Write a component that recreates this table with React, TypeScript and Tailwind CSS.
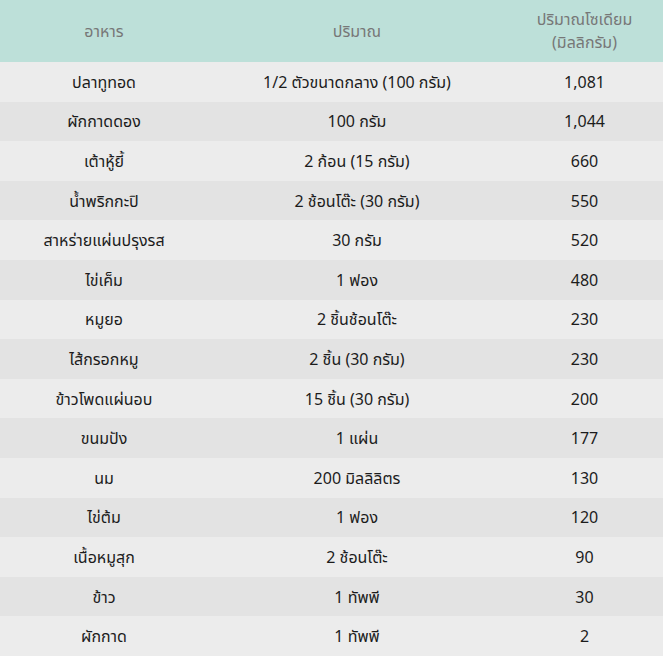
import React from "react";

const rows: [string, string, string][] = [
  ["ปลาทูทอด", "1/2 ตัวขนาดกลาง (100 กรัม)", "1,081"],
  ["ผักกาดดอง", "100 กรัม", "1,044"],
  ["เต้าหู้ยี้", "2 ก้อน (15 กรัม)", "660"],
  ["น้ำพริกกะปิ", "2 ช้อนโต๊ะ (30 กรัม)", "550"],
  ["สาหร่ายแผ่นปรุงรส", "30 กรัม", "520"],
  ["ไข่เค็ม", "1 ฟอง", "480"],
  ["หมูยอ", "2 ชิ้นช้อนโต๊ะ", "230"],
  ["ไส้กรอกหมู", "2 ชิ้น (30 กรัม)", "230"],
  ["ข้าวโพดแผ่นอบ", "15 ชิ้น (30 กรัม)", "200"],
  ["ขนมปัง", "1 แผ่น", "177"],
  ["นม", "200 มิลลิลิตร", "130"],
  ["ไข่ต้ม", "1 ฟอง", "120"],
  ["เนื้อหมูสุก", "2 ช้อนโต๊ะ", "90"],
  ["ข้าว", "1 ทัพพี", "30"],
  ["ผักกาด", "1 ทัพพี", "2"],
];

export default function App() {
  return (
    <div
      className="w-[663px] h-[656px] overflow-hidden bg-white text-[16px] text-[#1c1c1c]"
      style={{ fontFamily: '"Noto Sans", "Noto Sans Thai", Tahoma, sans-serif' }}
    >
      <div className="grid grid-cols-[208px_298px_157px] h-[62px] bg-[#bde0d9] text-[#777]">
        <div className="flex items-center justify-center">อาหาร</div>
        <div className="flex items-center justify-center">ปริมาณ</div>
        <div className="flex flex-col items-center justify-center leading-[23px] text-center">
          <span>ปริมาณโซเดียม</span>
          <span>(มิลลิกรัม)</span>
        </div>
      </div>
      {rows.map((r, i) => (
        <div
          key={i}
          className={`grid grid-cols-[208px_298px_157px] h-[39.6px] ${
            i % 2 === 0 ? "bg-[#ececec]" : "bg-[#e3e3e3]"
          }`}
        >
          <div className="flex items-center justify-center">{r[0]}</div>
          <div className="flex items-center justify-center">{r[1]}</div>
          <div className="flex items-center justify-center">{r[2]}</div>
        </div>
      ))}
    </div>
  );
}
